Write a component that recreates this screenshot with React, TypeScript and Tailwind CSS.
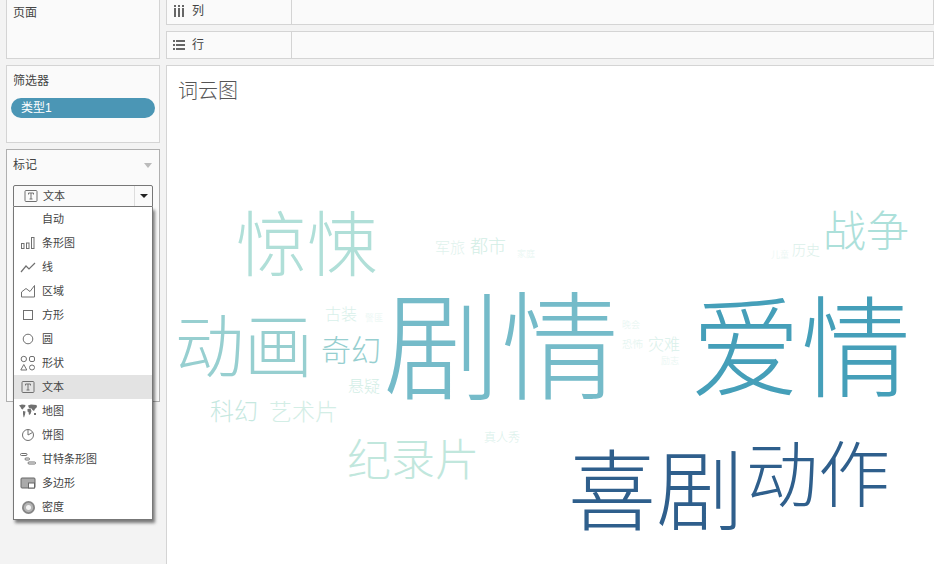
import type { ReactNode } from 'react'

const cjk = "font-['Liberation_Sans','Noto_Sans_CJK_SC',sans-serif]"

// word cloud: place is the content here, so these are absolute
const words = [
  { t: '剧情', x: 383, y: 291, s: 118, c: '#75bbc9' },
  { t: '爱情', x: 691, y: 296, s: 110, c: '#459fb9' },
  { t: '喜剧', x: 568, y: 449, s: 88, c: '#2f5f8c' },
  { t: '动作', x: 746, y: 440, s: 72, c: '#2f5f8c' },
  { t: '惊悚', x: 236, y: 210, s: 71, c: '#b0dfd8' },
  { t: '动画', x: 175, y: 314, s: 69, c: '#97cfd0' },
  { t: '战争', x: 823, y: 211, s: 43, c: '#ace0da' },
  { t: '纪录片', x: 347, y: 439, s: 44, c: '#c1e7dd' },
  { t: '奇幻', x: 321, y: 336, s: 30, c: '#97cfd0' },
  { t: '科幻', x: 210, y: 400, s: 24, c: '#c6e8df' },
  { t: '艺术片', x: 269, y: 401, s: 23, c: '#d3eee6' },
  { t: '悬疑', x: 348, y: 379, s: 16, c: '#d3eee6' },
  { t: '古装', x: 325, y: 307, s: 16, c: '#d9f0ea' },
  { t: '都市', x: 470, y: 238, s: 18, c: '#d3eee6' },
  { t: '军旅', x: 435, y: 240, s: 15, c: '#dff2ed' },
  { t: '历史', x: 792, y: 243, s: 14, c: '#dbf0ea' },
  { t: '灾难', x: 648, y: 337, s: 16, c: '#d9f0ea' },
  { t: '真人秀', x: 484, y: 432, s: 12, c: '#d9f0ea' },
  { t: '恐怖', x: 622, y: 339, s: 10.5, c: '#e0f3ee' },
  { t: '家庭', x: 517, y: 250, s: 9, c: '#e6f5f1' },
  { t: '警匪', x: 365, y: 314, s: 9, c: '#e6f5f1' },
  { t: '儿童', x: 771, y: 251, s: 9, c: '#e6f5f1' },
  { t: '晚会', x: 622, y: 321, s: 9, c: '#e6f5f1' },
  { t: '励志', x: 661, y: 357, s: 9, c: '#e6f5f1' },
]

function Stroke({ children, className }: { children: ReactNode; className?: string }) {
  return (
    <svg viewBox="0 0 16 16" className={className ?? 'w-4 h-4'} fill="none" stroke="#707070" strokeWidth="1">
      {children}
    </svg>
  )
}

function TextIcon() {
  return (
    <svg viewBox="0 0 14 12" className="h-3 w-[14px]" fill="none" stroke="#707070">
      <rect x="1" y="0.5" width="12" height="11" rx="1" />
      <path d="M4.500 4.500V3h5v1.500M7 3v6M5.500 9h3" />
    </svg>
  )
}

const menuItems: { label: string; icon?: ReactNode; active?: boolean }[] = [
  { label: '自动' },
  {
    label: '条形图',
    icon: (
      <Stroke>
        <rect x="1.500" y="8.500" width="2.500" height="5" />
        <rect x="6.500" y="8" width="2.500" height="5.500" />
        <rect x="11.500" y="2.500" width="2.500" height="11" />
      </Stroke>
    ),
  },
  {
    label: '线',
    icon: (
      <Stroke>
        <path d="M1 13l5-6 3 3 6-6" strokeWidth="1.200" />
      </Stroke>
    ),
  },
  {
    label: '区域',
    icon: (
      <Stroke>
        <path d="M1.500 14V9l4.500-3.500 4 3 4.500-6V14z" />
      </Stroke>
    ),
  },
  {
    label: '方形',
    icon: (
      <Stroke>
        <rect x="3.500" y="3.500" width="9" height="9" />
      </Stroke>
    ),
  },
  {
    label: '圆',
    icon: (
      <Stroke>
        <circle cx="8" cy="8" r="4.800" />
      </Stroke>
    ),
  },
  {
    label: '形状',
    icon: (
      <Stroke>
        <circle cx="3.800" cy="4" r="2.700" />
        <rect x="9.500" y="1.500" width="5" height="5" rx="1.500" />
        <path d="M3.800 9.500l3 5.500h-6z" />
        <circle cx="12" cy="12.500" r="2.500" />
      </Stroke>
    ),
  },
  { label: '文本', icon: <TextIcon />, active: true },
  {
    label: '地图',
    icon: (
      <svg viewBox="0 0 18 14" className="h-[14px] w-[18px]" fill="#707070">
        <path d="M0 1.500L3 .5 6.500 1 6 3 4.500 4 4 5.500 2.500 5 1.500 3z" />
        <path d="M4 7l2.500.5L6 10.500 5 13.500 4.500 13 4 10z" />
        <path d="M8.500 5l3-.5 1 2.500-1 3-1.500 1-.5-3-1-.5z" />
        <path d="M9 1.500L12 .5l5.500.5.5 2-2 2-1 2-1.500-1-1-1.500L10 4z" />
        <path d="M15 9h2v2h-2z" />
      </svg>
    ),
  },
  {
    label: '饼图',
    icon: (
      <Stroke>
        <circle cx="8" cy="8" r="5.500" />
        <path d="M8 2.500V8l4.500-2.500" />
      </Stroke>
    ),
  },
  {
    label: '甘特条形图',
    icon: (
      <Stroke>
        <rect x="0.500" y="2.500" width="6.500" height="2" rx="1" />
        <rect x="5" y="7" width="4.500" height="2" rx="1" />
        <rect x="8" y="11" width="7.500" height="2" rx="1" />
      </Stroke>
    ),
  },
  {
    label: '多边形',
    icon: (
      <svg viewBox="0 0 16 16" className="h-4 w-4">
        <rect x="1" y="3" width="14" height="10" rx="1" fill="#aaa" stroke="#666" />
        <rect x="8.500" y="8" width="6" height="5" fill="#fff" stroke="#666" />
      </svg>
    ),
  },
  {
    label: '密度',
    icon: (
      <svg viewBox="0 0 13 13" className="h-[13px] w-[13px]">
        <circle cx="6.500" cy="6.500" r="6.500" fill="#858585" />
        <circle cx="6.500" cy="6.500" r="4.700" fill="#b5b5b5" />
        <circle cx="6.500" cy="6.500" r="2.500" fill="#f4f4f4" />
      </svg>
    ),
  },
]

function ShelfRow({ icon, label, className }: { icon: ReactNode; label: string; className?: string }) {
  return (
    <div className="flex h-full items-stretch border border-[#d4d4d4] bg-[#fafafa]">
      <div className={`flex w-[125px] items-center gap-[7px] border-r border-[#d4d4d4] pl-[6px] ${className ?? ''}`}>
        {icon}
        <span className="text-xs text-[#444]">{label}</span>
      </div>
    </div>
  )
}

export default function App() {
  return (
    <div className={`${cjk} flex h-[564px] w-[934px] overflow-hidden bg-[#f3f3f3] text-xs text-[#444]`}>
      {/* left cards */}
      <aside className="relative flex w-[166px] shrink-0 flex-col gap-[6px] pl-[6px] pr-[6px]">
        <section className="h-[59px] border border-t-0 border-[#d4d4d4] bg-[#fafafa] px-[6px] pt-[5px]">页面</section>
        <section className="h-[78px] border border-[#d4d4d4] bg-[#fafafa] pl-[4px] pr-[4px] pt-[7px]">
          <div className="pl-[2px]">筛选器</div>
          <div className="mt-[9px] flex h-5 items-center rounded-full bg-[#4b96b5] pl-[10px] text-white">类型1</div>
        </section>
        <section className="h-[253px] border border-[#b0b0b0] bg-[#fafafa] px-[6px] pt-[7px]">
          <div className="flex items-center justify-between">
            <span>标记</span>
            <span className="mr-[1px] h-0 w-0 border-x-[4px] border-t-[5px] border-x-transparent border-t-[#bbb]" />
          </div>
        </section>

        {/* open marks dropdown lies over the card */}
        <div className="absolute left-[13px] top-[185px] w-[140px] text-[11px]">
          <div className="flex h-[22px] items-center rounded-t-[2px] border border-[#777] bg-[#fafafa]">
            <span className="flex flex-1 items-center gap-[5px] pl-[10px]">
              <TextIcon />
              文本
            </span>
            <span className="flex h-full w-[18px] items-center justify-center border-l border-[#ddd]">
              <span className="h-0 w-0 border-x-[4px] border-t-[4px] border-x-transparent border-t-[#222]" />
            </span>
          </div>
          <ul className="border border-t-0 border-[#777] bg-white shadow-[2px_3px_3px_rgba(0,0,0,0.5)]">
            {menuItems.map(item => (
              <li
                key={item.label}
                className={`flex h-6 items-center ${item.active ? 'bg-[#e3e3e3]' : ''}`}
              >
                <span className="flex w-7 shrink-0 items-center justify-center">{item.icon}</span>
                <span className="pt-px">{item.label}</span>
              </li>
            ))}
          </ul>
        </div>
      </aside>

      {/* shelves + view */}
      <main className="flex min-w-0 flex-1 flex-col gap-[6px]">
        <div className="-mt-px h-[26px]">
          <ShelfRow
            label="列"
            className="pb-[2px]"
            icon={
              <svg viewBox="0 0 12 12" className="h-3 w-3" fill="#666">
                <path d="M1 0h2v2H1zM5 0h2v2H5zM9 0h2v2H9zM1 3h2v9H1zM5 3h2v9H5zM9 3h2v9H9z" />
              </svg>
            }
          />
        </div>
        <div className="h-[28px]">
          <ShelfRow
            label="行"
            icon={
              <svg viewBox="0 0 12 12" className="h-3 w-3" fill="#666">
                <path d="M0 1h2v2H0zM3 1h9v2H3zM0 5h2v2H0zM3 5h9v2H3zM0 9h2v2H0zM3 9h9v2H3z" />
              </svg>
            }
          />
        </div>
        <section className="relative flex-1 border-l border-t border-[#d4d4d4] bg-white">
          <h1 className="pl-[11px] pt-[13px] text-[20px] font-light leading-[24px] text-[#555]">词云图</h1>
        </section>
      </main>

      {/* cloud words, coordinates are page based */}
      <div className="pointer-events-none absolute left-0 top-0">
        {words.map(w => (
          <span
            key={w.t}
            className="absolute whitespace-nowrap font-light leading-none"
            style={{ left: w.x, top: w.y, fontSize: w.s, color: w.c }}
          >
            {w.t}
          </span>
        ))}
      </div>
    </div>
  )
}
